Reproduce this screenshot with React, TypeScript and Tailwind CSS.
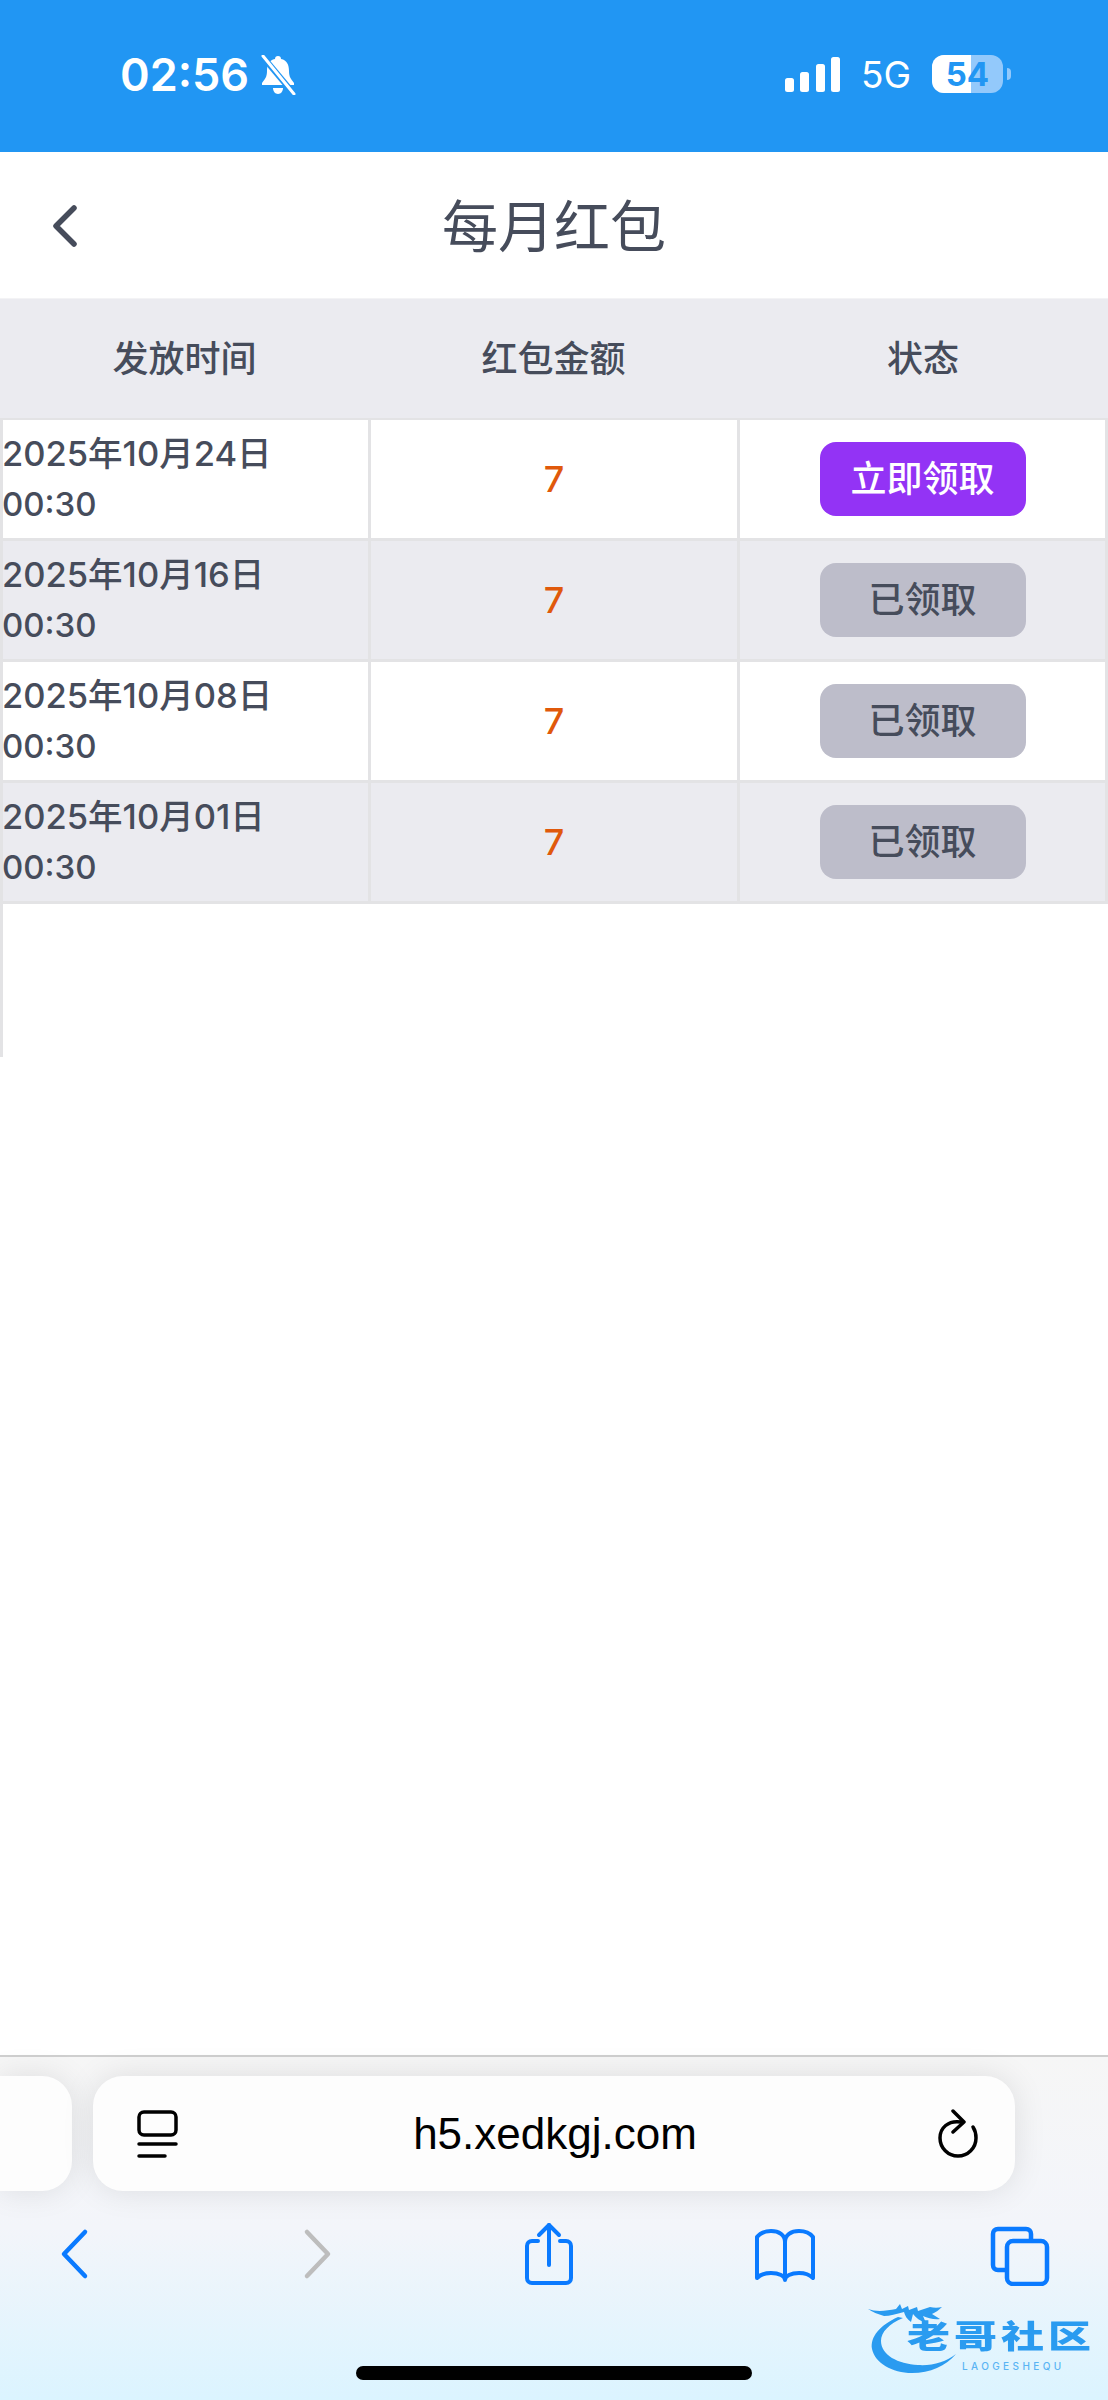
const rows = [
  { date: "2025年10月24日", time: "00:30", amount: 7, claimed: false },
  { date: "2025年10月16日", time: "00:30", amount: 7, claimed: true },
  { date: "2025年10月08日", time: "00:30", amount: 7, claimed: true },
  { date: "2025年10月01日", time: "00:30", amount: 7, claimed: true },
];

export default function App() {
  return (
    <div className="flex h-[2400px] w-[1108px] flex-col overflow-hidden bg-white font-['Inter','Noto_Sans_CJK_SC',sans-serif] text-[#464c5b]">
      <StatusBar />

      {/* Page header */}
      <div className="relative flex h-[147px] items-center justify-center border-b border-[#f3f3f5]">
        <svg className="absolute left-[50px] top-[52px]" width="30" height="44" viewBox="0 0 30 44" fill="none">
          <path d="M24 4 L6 22 L24 40" stroke="#464c5b" strokeWidth="5.5" strokeLinecap="round" strokeLinejoin="round" />
        </svg>
        <span className="pt-[4px] text-[56px] leading-none">每月红包</span>
      </div>

      {/* Table */}
      <div className="grid h-[119px] grid-cols-[369px_369px_1fr] bg-[#ebebf0] text-[36px] font-medium">
        <div className="flex items-center justify-center">发放时间</div>
        <div className="flex items-center justify-center">红包金额</div>
        <div className="flex items-center justify-center">状态</div>
      </div>
      <div className="h-[639px] border-l-[3px] border-[#e3e3e5]">
        <div className="border-t-2 border-[#e3e3e5]">
          {rows.map((row, i) => (
            <Row key={row.date} row={row} shaded={i % 2 === 1} />
          ))}
        </div>
      </div>

      <div className="flex-1" />
      <BrowserBar />
    </div>
  );
}

function Row({ row, shaded }: { row: (typeof rows)[number]; shaded: boolean }) {
  return (
    <div className={`grid h-[121px] grid-cols-[365px_369px_1fr] border-b-[3px] border-[#e3e3e5] ${shaded ? "bg-[#ebebf0]" : "bg-white"}`}>
      <div className="-ml-px flex flex-col justify-center font-medium leading-[51px]">
        <span className="text-[34.5px]">{row.date}</span>
        <span className="text-[33px]">{row.time}</span>
      </div>
      <div className="flex items-center justify-center border-l-[3px] border-[#e3e3e5] text-[36px] font-medium text-[#e0590b]">{row.amount}</div>
      <div className="flex items-center justify-center border-x-[3px] border-[#e3e3e5] text-[36px] font-medium">
        {row.claimed ? (
          <div className="flex h-[74px] w-[206px] items-center justify-center rounded-[16px] bg-[#bdbdca]">已领取</div>
        ) : (
          <div className="flex h-[74px] w-[206px] items-center justify-center rounded-[16px] bg-[#9333f5] text-white">立即领取</div>
        )}
      </div>
    </div>
  );
}

function StatusBar() {
  return (
    <div className="flex h-[152px] items-start bg-[#2196f3] pl-[120px] pr-[97px] pt-[52px] text-white">
      <span className="text-[45px] font-semibold leading-[46px]">02:56</span>
      <svg className="ml-[11px] mt-[3px]" width="36" height="40" viewBox="0 0 36 40">
        <path d="M18 1c2 0 3 1 3 3 6 1 8 6 8 12 0 6 2 8 5 12v2H2v-2c3-4 5-6 5-12 0-6 2-11 8-12 0-2 1-3 3-3z" fill="#fff" />
        <path d="M13 33h10c0 3-2 6-5 6s-5-3-5-6z" fill="#fff" />
        <path d="M3 2l31 37" stroke="#2196f3" strokeWidth="6" />
        <path d="M3 1l31 38" stroke="#fff" strokeWidth="3" strokeLinecap="round" />
      </svg>
      <div className="ml-auto flex items-start">
        <svg className="mt-[5px]" width="56" height="36" viewBox="0 0 56 36" fill="#fff">
          <rect x="0" y="21" width="9" height="14" rx="2.5" />
          <rect x="15" y="15" width="9" height="20" rx="2.5" />
          <rect x="31" y="7" width="9" height="28" rx="2.5" />
          <rect x="46" y="0" width="9" height="35" rx="2.5" />
        </svg>
        <span className="ml-[20px] text-[37px] leading-[46px]">5G</span>
        <div className="relative ml-[21px] mt-[3px] flex h-[38px] w-[71px] items-center justify-center overflow-hidden rounded-[12px] bg-[#93c9fb]">
          <div className="absolute inset-y-0 left-0 w-[39px] bg-white" />
          <span className="relative text-[33px] font-bold leading-none text-[#2196f3]">54</span>
        </div>
        <div className="ml-[4px] mt-[16px] h-[12px] w-[4px] rounded-r-full bg-[#93c9fb]" />
      </div>
    </div>
  );
}

function BrowserBar() {
  return (
    <div className="relative h-[345px] border-t-2 border-[#cfcfcf] bg-gradient-to-b from-[#f6f6f6] via-[#f3f5fa] via-50% to-[#dbf4ff]">
      <div className="mt-[19px] flex gap-[21px]">
        <div className="h-[115px] w-[72px] rounded-r-[30px] bg-[#fdfdfd] shadow-[0_0_32px_rgba(0,0,0,0.1)]" />
        <div className="flex h-[115px] w-[922px] items-center justify-between rounded-[30px] bg-[#fdfdfd] pl-[44px] pr-[36px] shadow-[0_0_32px_rgba(0,0,0,0.1)]">
          <svg width="42" height="48" viewBox="0 0 42 48" fill="none" stroke="#000" strokeWidth="3.5" strokeLinecap="round">
            <rect x="2" y="2" width="37" height="23" rx="5" />
            <path d="M2 34h37" />
            <path d="M2 46h26" />
          </svg>
          <span className="-translate-x-[3px] font-['Liberation_Sans',sans-serif] text-[44px] leading-none text-black">h5.xedkgj.com</span>
          <svg width="42" height="50" viewBox="0 0 42 50" fill="none" stroke="#000" strokeWidth="3.5" strokeLinecap="round" strokeLinejoin="round">
            <path d="M24 13C11 11 3 19 3 29c0 10 8 18 18 18s18-8 18-18c0-5-1-8-3-11" />
            <path d="M16 2l11 11-11 10" />
          </svg>
        </div>
      </div>

      {/* Toolbar icons */}
      <div className="mt-[31px] flex items-start">
        <svg className="ml-[60px]" width="30" height="64" viewBox="0 0 30 64" fill="none" stroke="#0a7aff" strokeWidth="4.5" strokeLinecap="round" strokeLinejoin="round">
          <path d="M25 10L4 32l21 22" />
        </svg>
        <svg className="ml-[212px]" width="30" height="64" viewBox="0 0 30 64" fill="none" stroke="#bdbdbd" strokeWidth="4.5" strokeLinecap="round" strokeLinejoin="round">
          <path d="M5 10l21 22-21 22" />
        </svg>
        <svg className="ml-[191px]" width="52" height="64" viewBox="0 0 52 64" fill="none" stroke="#0a7aff" strokeWidth="4" strokeLinecap="round" strokeLinejoin="round">
          <path d="M15 19H9c-3 0-5 2-5 5v32c0 3 2 5 5 5h34c3 0 5-2 5-5V24c0-3-2-5-5-5h-6" />
          <path d="M26 43V3" />
          <path d="M16 13L26 3l10 10" />
        </svg>
        <svg className="ml-[178px]" width="64" height="64" viewBox="0 0 64 64" fill="none" stroke="#0a7aff" strokeWidth="4" strokeLinecap="round" strokeLinejoin="round">
          <path d="M32 20c0-7-6-11-14-11-6 0-11 2-14 6v41c4-4 9-5 14-5 8 0 14 3 14 7 0-4 6-7 14-7 5 0 10 1 14 5V15c-3-4-8-6-14-6-8 0-14 4-14 11v37" />
        </svg>
        <svg className="ml-[172px]" width="62" height="64" viewBox="0 0 62 64" fill="none" stroke="#0a7aff" strokeWidth="4.5" strokeLinejoin="round">
          <path d="M16 48H9c-3 0-5-2-5-5V12c0-3 2-5 5-5h28c3 0 5 2 5 5v6" />
          <rect x="18" y="19" width="40" height="43" rx="6" />
        </svg>
      </div>

      {/* Home indicator */}
      <div className="absolute bottom-[20px] left-[356px] h-[14px] w-[396px] rounded-full bg-black" />

      {/* Watermark */}
      <div className="absolute left-[868px] top-[246px] h-[74px] w-[236px] text-[#2a9bf0]">
        <svg className="absolute inset-0 blur-[0.7px]" width="236" height="74" viewBox="0 0 236 74" fill="#2a9bf0">
          <path d="M30 14C12 22 2 34 4 46c3 14 20 24 40 24 18 0 34-7 44-19-10 8-24 12-38 11C30 61 13 52 13 38c0-9 8-17 22-23z" />
          <path d="M0 6c8 3 18 2 28 0l4-5 2 5 6-3 1 4 8-3 1 4 12-4c4 1 8 1 12 0-3 3-6 5-10 7l8 5c-6 1-12-1-17-3l3 7c-6-2-10-5-13-9l-2 8c-4-3-6-6-7-10-8 2-14 4-20 4C10 11 4 9 0 6z" />
        </svg>
        <span className="absolute left-[39px] top-[18px] origin-top scale-y-[0.74] whitespace-nowrap text-[43px] font-black leading-none tracking-[4px]">老哥社区</span>
        <span className="absolute left-[94px] top-[58px] whitespace-nowrap text-[10px] font-medium leading-none tracking-[3.4px] text-[#5ab4f4]">LAOGESHEQU</span>
      </div>
    </div>
  );
}
